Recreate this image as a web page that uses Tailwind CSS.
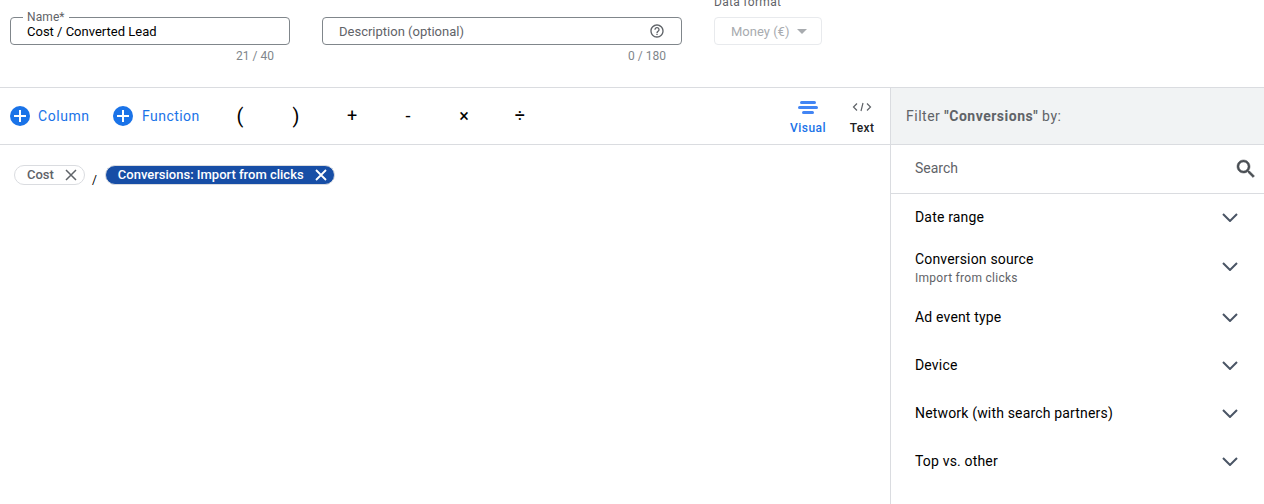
<!DOCTYPE html>
<html lang="en">
<head>
    <meta charset="UTF-8">
    <title>Cost / Converted Lead</title>
    <script src="https://cdn.jsdelivr.net/npm/@tailwindcss/browser@4"></script>
</head>
<body class="bg-white h-[504px] overflow-hidden font-[Roboto,sans-serif] text-[14px] text-[#202124]">
    <!-- Name, description, format -->
    <div class="h-[87px] flex pl-[10px] pt-[17px] overflow-hidden">
        <div class="w-[280px] mr-[32px]">
            <div class="relative h-[28px] border border-[#80868b] rounded-[4px] pl-[16px] flex items-center text-[13px] leading-none text-black">
                <span class="absolute -top-[8px] left-[12px] bg-white px-[4px] text-[12px] leading-[14px] tracking-[0.1px] text-[#5f6368]">Name*</span>
                Cost / Converted Lead
            </div>
            <div class="text-right pr-[16px] mt-[3px] text-[12px] leading-[16px] text-[#80868b]">21 / 40</div>
        </div>
        <div class="w-[360px] mr-[32px]">
            <div class="h-[28px] border border-[#80868b] rounded-[4px] pl-[16px] pr-[16px] flex items-center justify-between text-[13px] leading-none text-[#5f6368]">
                Description (optional)
                <svg class="w-[16px] h-[16px]" viewBox="0 0 24 24" fill="#5f6368"><path d="M11 18h2v-2h-2v2zm1-16C6.48 2 2 6.48 2 12s4.48 10 10 10 10-4.48 10-10S17.52 2 12 2zm0 18c-4.41 0-8-3.59-8-8s3.59-8 8-8 8 3.59 8 8-3.59 8-8 8zm0-14c-2.21 0-4 1.79-4 4h2c0-1.1.9-2 2-2s2 .9 2 2c0 2-3 1.75-3 5h2c0-2.25 3-2.5 3-5 0-2.21-1.79-4-4-4z"/></svg>
            </div>
            <div class="text-right pr-[16px] mt-[3px] text-[12px] leading-[16px] text-[#80868b]">0 / 180</div>
        </div>
        <div class="relative w-[108px]">
            <span class="absolute -top-[23px] left-0 text-[12px] leading-[16px] tracking-[0.3px] text-[#5f6368]">Data format</span>
            <div class="h-[28px] border border-[#e8eaed] rounded-[4px] pl-[16px] flex items-center text-[13px] leading-none text-[#a8abaf]">
                Money (€)
                <span class="ml-[8px] w-0 h-0 border-x-[5px] border-x-transparent border-t-[5px] border-t-[#a8abaf]"></span>
            </div>
        </div>
    </div>

    <div class="h-[417px] border-t border-[#dadce0] flex">
        <!-- Formula editor -->
        <div class="w-[890px] shrink-0">
            <div class="h-[57px] border-b border-[#dadce0] flex items-center pl-[10px] relative">
                <svg class="w-[20px] h-[20px] mr-[8px]" viewBox="0 0 20 20"><circle cx="10" cy="10" r="10" fill="#1a73e8"/><path d="M10 4v12M4 10h12" stroke="#fff" stroke-width="2"/></svg>
                <span class="text-[#1a73e8] text-[14px] tracking-[0.55px] w-[75px]">Column</span>
                <svg class="w-[20px] h-[20px] mr-[9px]" viewBox="0 0 20 20"><circle cx="10" cy="10" r="10" fill="#1a73e8"/><path d="M10 4v12M4 10h12" stroke="#fff" stroke-width="2"/></svg>
                <span class="text-[#1a73e8] text-[14px] tracking-[0.45px] w-[70px]">Function</span>
                <div class="flex items-center text-black">
                    <span class="w-[56px] text-center text-[20px] leading-none">(</span>
                    <span class="w-[56px] text-center text-[20px] leading-none">)</span>
                    <span class="w-[56px] text-center text-[18px] leading-none">+</span>
                    <span class="w-[56px] text-center text-[18px] leading-none">-</span>
                    <span class="w-[56px] text-center text-[18px] leading-none">×</span>
                    <span class="w-[56px] text-center text-[18px] leading-none">÷</span>
                </div>
                <div class="ml-auto flex pr-[1px] pt-[3px]">
                    <div class="w-[54px] flex flex-col items-center">
                        <svg class="w-[20px] h-[16px] mb-[4px]" viewBox="0 0 20 16" fill="#4285f4"><rect x="2" y="1" width="16" height="3" rx="1.5"/><rect x="0" y="6" width="20" height="3" rx="1.5"/><rect x="4" y="11" width="12" height="3" rx="1.5"/></svg>
                        <span class="text-[12px] leading-[16px] font-medium tracking-[0.5px] text-[#1a73e8]">Visual</span>
                    </div>
                    <div class="w-[54px] flex flex-col items-center">
                        <svg class="w-[20px] h-[16px] mb-[4px]" viewBox="0 0 20 16" fill="none" stroke="#5f6368" stroke-width="1.2"><path d="M5 3.5 1.5 7 5 10.5M15 3.5 18.5 7 15 10.5M11 3 9 11"/></svg>
                        <span class="text-[12px] leading-[16px] font-medium tracking-[0.3px] text-[#202124]">Text</span>
                    </div>
                </div>
            </div>
            <div class="flex items-start pl-[14px] pt-[20px]">
                <div class="h-[20px] border border-[#dadce0] rounded-full flex items-center pl-[12px] pr-[7px]">
                    <span class="text-[13px] font-medium text-[#5f6368]">Cost</span>
                    <svg class="w-[12px] h-[12px] ml-[11px]" viewBox="0 0 12 12" stroke="#5f6368" stroke-width="1.5"><path d="M1 1l10 10M11 1 1 11"/></svg>
                </div>
                <span class="text-[12px] leading-[16px] text-black ml-[7px] mr-[8px] mt-[7px]">/</span>
                <div class="h-[20px] bg-[#174ea6] rounded-full flex items-center pl-[12px] pr-[7px] border border-[#dadce0]">
                    <span class="text-[13px] font-medium text-white">Conversions: Import from clicks</span>
                    <svg class="w-[12px] h-[12px] ml-[11px]" viewBox="0 0 12 12" stroke="#fff" stroke-width="1.8"><path d="M1 1l10 10M11 1 1 11"/></svg>
                </div>
            </div>
        </div>

        <!-- Filter panel -->
        <div class="flex-1 border-l border-[#dadce0]">
            <div class="h-[57px] bg-[#f1f3f4] border-b border-[#dadce0] flex items-center pl-[15px] text-[14px] tracking-[0.5px] text-[#5f6368]">
                <span class="mt-[1px]">Filter <b class="font-bold">"Conversions"</b> by:</span>
            </div>
            <div class="h-[49px] border-b border-[#dadce0] flex items-center justify-between pl-[24px] pr-[6px] text-[14px] text-[#5f6368] pb-[1px]">
                Search
                <svg class="w-[24px] h-[24px]" viewBox="0 0 24 24" fill="#4a4f54" stroke="#4a4f54" stroke-width="0.5"><path d="M15.5 14h-.79l-.28-.27C15.41 12.59 16 11.11 16 9.5 16 5.91 13.09 3 9.5 3S3 5.91 3 9.5 5.91 16 9.5 16c1.61 0 3.09-.59 4.23-1.57l.27.28v.79l5 4.99L20.49 19l-4.99-5zm-6 0C7.01 14 5 11.99 5 9.5S7.01 5 9.5 5 14 7.01 14 9.5 11.99 14 9.5 14z"/></svg>
            </div>
            <div class="h-[47px] flex items-center justify-between pl-[24px] pr-[26px] text-black tracking-[0.17px]">
                <span>Date range</span>
                <svg class="w-[16px] h-[9px]" viewBox="0 0 16 9" fill="none" stroke="#4a5565" stroke-width="2"><path d="M1 1l7 7 7-7"/></svg>
            </div>
            <div class="h-[52px] flex items-center justify-between pl-[24px] pr-[26px] text-black tracking-[0.17px]">
                <div>
                    <div class="leading-[20px]">Conversion source</div>
                    <div class="text-[12px] leading-[16px] tracking-[0.28px] text-[#5f6368] mt-[1px]">Import from clicks</div>
                </div>
                <svg class="w-[16px] h-[9px] -mt-[2px]" viewBox="0 0 16 9" fill="none" stroke="#4a5565" stroke-width="2"><path d="M1 1l7 7 7-7"/></svg>
            </div>
            <div class="h-[48px] flex items-center justify-between pl-[24px] pr-[26px] text-black tracking-[0.17px]">
                <span>Ad event type</span>
                <svg class="w-[16px] h-[9px] mt-[1px]" viewBox="0 0 16 9" fill="none" stroke="#4a5565" stroke-width="2"><path d="M1 1l7 7 7-7"/></svg>
            </div>
            <div class="h-[48px] flex items-center justify-between pl-[24px] pr-[26px] text-black tracking-[0.17px]">
                <span>Device</span>
                <svg class="w-[16px] h-[9px] mt-[1px]" viewBox="0 0 16 9" fill="none" stroke="#4a5565" stroke-width="2"><path d="M1 1l7 7 7-7"/></svg>
            </div>
            <div class="h-[48px] flex items-center justify-between pl-[24px] pr-[26px] text-black tracking-[0.17px]">
                <span>Network (with search partners)</span>
                <svg class="w-[16px] h-[9px] mt-[1px]" viewBox="0 0 16 9" fill="none" stroke="#4a5565" stroke-width="2"><path d="M1 1l7 7 7-7"/></svg>
            </div>
            <div class="h-[48px] flex items-center justify-between pl-[24px] pr-[26px] text-black tracking-[0.17px]">
                <span>Top vs. other</span>
                <svg class="w-[16px] h-[9px] mt-[1px]" viewBox="0 0 16 9" fill="none" stroke="#4a5565" stroke-width="2"><path d="M1 1l7 7 7-7"/></svg>
            </div>
        </div>
    </div>
</body>
</html>
